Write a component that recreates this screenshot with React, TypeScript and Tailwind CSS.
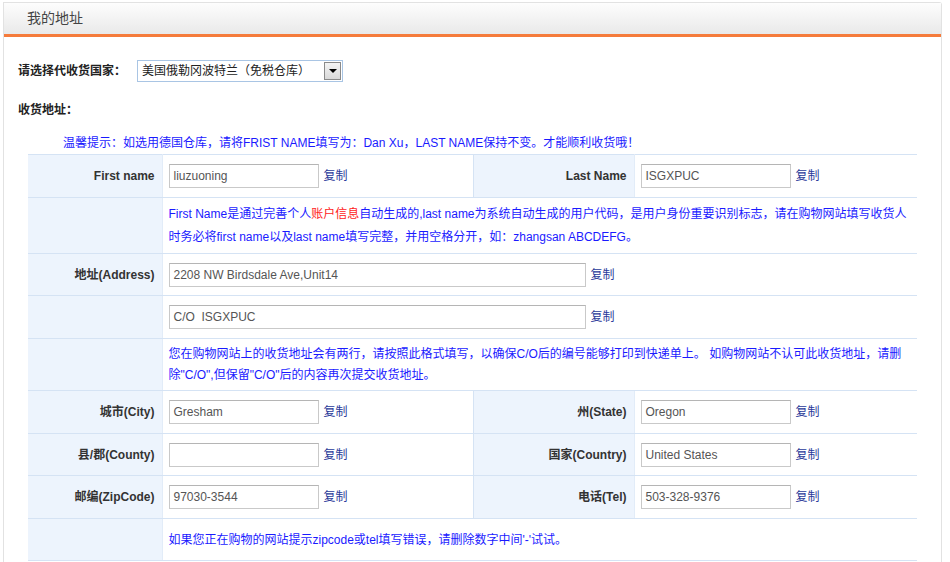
import React from "react";

const font = { fontFamily: '"Liberation Sans", Arial, "Noto Sans CJK SC", sans-serif' };

function Field({ value, w = "w-[150px]" }: { value: string; w?: string }) {
  return (
    <div className="flex items-center">
      <div
        className={`${w} h-[24px] border border-[#c9c9c9] border-t-[#b5b5b5] bg-white flex items-center px-[4px] text-[12px] text-[#555] whitespace-pre`}
      >
        {value}
      </div>
      <span className="ml-[5px] text-[12px] text-[#2a3a9a]">复制</span>
    </div>
  );
}

const labelCls =
  "bg-[#edf4fd] text-right pr-[7px] font-bold text-[12px] text-[#333] border-b border-[#d5e3f4] border-r border-r-[#e2ecf8]";
const valCls = "bg-white pl-[6px] border-b border-[#d5e3f4]";

export default function App() {
  return (
    <div className="w-[950px] h-[562px] bg-white overflow-hidden" style={font}>
      <div className="ml-[3px] mt-[2px] w-[939px] h-[580px] border border-[#e2e2e2] border-b-0 rounded-tr-[3px]">
        <div className="h-[34px] bg-gradient-to-b from-[#fdfdfd] to-[#e9e9e9] border-b-[3px] border-[#f57b3b] flex items-center pl-[23px] text-[14px] text-[#444]">
          我的地址
        </div>
        <div className="pl-[14px] pt-[23px]">
          <div className="flex items-center h-[22px]">
            <span className="font-bold text-[12px] text-[#222]">请选择代收货国家：</span>
            <div className="ml-[11px] w-[206px] h-[22px] border border-[#a9c5e4] flex items-center justify-between pl-[4px] pr-[1px] bg-white">
              <span className="text-[12px] text-[#222]">美国俄勒冈波特兰（免税仓库）</span>
              <div className="w-[17px] h-[18px] border border-[#8a8a8a] bg-gradient-to-b from-[#f4f4f4] to-[#d9d9d9] flex items-center justify-center">
                <div className="w-0 h-0 border-l-[4px] border-r-[4px] border-t-[4px] border-l-transparent border-r-transparent border-t-black" />
              </div>
            </div>
          </div>
          <div className="mt-[20px] font-bold text-[12px] text-[#222] h-[16px] leading-[16px]">收货地址：</div>
          <div className="mt-[15px] pl-[45px] text-[12px] text-[#1a1aff] h-[20px] leading-[20px]">
            温馨提示：如选用德国仓库，请将FRIST NAME填写为：Dan Xu，LAST NAME保持不变。才能顺利收货哦！
          </div>
        </div>
        <table className="mt-[1px] ml-[24px] border-collapse border-t border-[#d5e3f4] w-[889px] table-fixed">
          <colgroup>
            <col className="w-[134px]" />
            <col className="w-[311px]" />
            <col className="w-[161px]" />
            <col className="w-[283px]" />
          </colgroup>
          <tbody>
            <tr className="h-[43px]">
              <td className={labelCls}>First name</td>
              <td className={valCls + " border-r border-r-[#d5e3f4]"}>
                <Field value="liuzuoning" />
              </td>
              <td className={labelCls}>Last Name</td>
              <td className={valCls}>
                <Field value="ISGXPUC" />
              </td>
            </tr>
            <tr className="h-[56px]">
              <td className={labelCls}></td>
              <td colSpan={3} className={valCls + " text-[12px] text-[#1a1aff] leading-[23px]"}>
                <div className="whitespace-nowrap">
                  First Name是通过完善个人<span className="text-[#ff1a1a]">账户信息</span>
                  自动生成的,last name为系统自动生成的用户代码，是用户身份重要识别标志，请在购物网站填写收货人
                </div>
                <div className="whitespace-nowrap">
                  时务必将first name以及last name填写完整，并用空格分开，如：zhangsan ABCDEFG。
                </div>
              </td>
            </tr>
            <tr className="h-[42px]">
              <td className={labelCls}>地址(Address)</td>
              <td colSpan={3} className={valCls}>
                <Field value="2208 NW Birdsdale Ave,Unit14" w="w-[417px]" />
              </td>
            </tr>
            <tr className="h-[43px]">
              <td className={labelCls}></td>
              <td colSpan={3} className={valCls}>
                <Field value={"C/O  ISGXPUC"} w="w-[417px]" />
              </td>
            </tr>
            <tr className="h-[52px]">
              <td className={labelCls}></td>
              <td colSpan={3} className={valCls + " text-[12px] text-[#1a1aff] leading-[21px]"}>
                <div className="whitespace-nowrap">
                  您在购物网站上的收货地址会有两行，请按照此格式填写，以确保C/O后的编号能够打印到快递单上。 如购物网站不认可此收货地址，请删
                </div>
                <div className="whitespace-nowrap">除"C/O",但保留"C/O"后的内容再次提交收货地址。</div>
              </td>
            </tr>
            <tr className="h-[43px]">
              <td className={labelCls}>城市(City)</td>
              <td className={valCls + " border-r border-r-[#d5e3f4]"}>
                <Field value="Gresham" />
              </td>
              <td className={labelCls}>州(State)</td>
              <td className={valCls}>
                <Field value="Oregon" />
              </td>
            </tr>
            <tr className="h-[42px]">
              <td className={labelCls}>县/郡(County)</td>
              <td className={valCls + " border-r border-r-[#d5e3f4]"}>
                <Field value="" />
              </td>
              <td className={labelCls}>国家(Country)</td>
              <td className={valCls}>
                <Field value="United States" />
              </td>
            </tr>
            <tr className="h-[43px]">
              <td className={labelCls}>邮编(ZipCode)</td>
              <td className={valCls + " border-r border-r-[#d5e3f4]"}>
                <Field value="97030-3544" />
              </td>
              <td className={labelCls}>电话(Tel)</td>
              <td className={valCls}>
                <Field value="503-328-9376" />
              </td>
            </tr>
            <tr className="h-[42px]">
              <td className={labelCls}></td>
              <td colSpan={3} className={valCls + " text-[12px] text-[#1a1aff]"}>
                如果您正在购物的网站提示zipcode或tel填写错误，请删除数字中间'-'试试。
              </td>
            </tr>
          </tbody>
        </table>
      </div>
    </div>
  );
}
